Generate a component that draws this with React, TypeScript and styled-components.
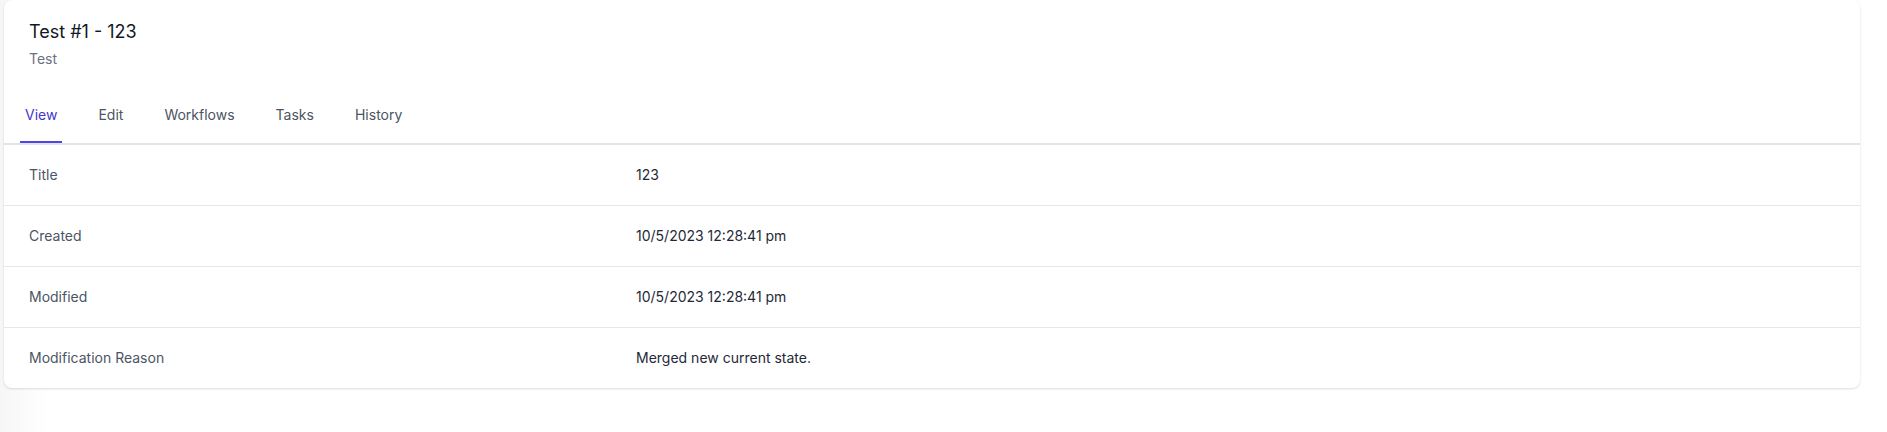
import React, { useState } from "react";
import styled, { createGlobalStyle } from "styled-components";

const GlobalStyle = createGlobalStyle`
  html, body {
    margin: 0;
    padding: 0;
  }

  body {
    font-family: Inter, "Noto Sans", sans-serif;
    background: linear-gradient(90deg, #f6f6f7 0px, #fcfcfc 30px, #ffffff 48px);
    min-height: 432px;
  }
`;

const Page = styled.div`
  padding: 0 27px 0 4px;
`;

const Card = styled.section`
  background: #ffffff;
  border-radius: 8px;
  box-shadow: 0 1px 3px rgba(0, 0, 0, 0.09), 0 1px 2px rgba(0, 0, 0, 0.05);
  overflow: hidden;
`;

const Header = styled.header`
  padding: 18px 25px 0;
`;

const Title = styled.h1`
  margin: 0;
  font-size: 18px;
  line-height: 28px;
  font-weight: 400;
  color: #111827;
`;

const Subtitle = styled.p`
  margin: 3px 0 0;
  font-size: 14px;
  line-height: 20px;
  color: #6b7280;
`;

const TabList = styled.nav`
  display: flex;
  gap: 31px;
  padding: 0 16px;
  border-bottom: 2px solid #e3e3e9;
`;

const Tab = styled.button<{ $active?: boolean }>`
  appearance: none;
  background: none;
  border: none;
  border-bottom: 2px solid ${(p) => (p.$active ? "#4f46e5" : "transparent")};
  margin: 0;
  padding: 36px 5px 16px;
  font-family: inherit;
  font-size: 14px;
  line-height: 20px;
  font-weight: 400;
  color: ${(p) => (p.$active ? "#4338ca" : "#4b5563")};
  cursor: pointer;
`;

const Rows = styled.dl`
  margin: 0;
`;

const Row = styled.div`
  display: grid;
  grid-template-columns: 607px 1fr;
  border-bottom: 1px solid #e5e7eb;

  &:last-child {
    border-bottom: none;
  }
`;

const Label = styled.dt`
  padding: 20px 25px;
  font-size: 14px;
  line-height: 20px;
  color: #4b5563;
`;

const Value = styled.dd`
  margin: 0;
  padding: 20px 25px;
  font-size: 14px;
  line-height: 20px;
  color: #1f2937;
`;

const tabs = ["View", "Edit", "Workflows", "Tasks", "History"];

const fields = [
  { label: "Title", value: "123" },
  { label: "Created", value: "10/5/2023 12:28:41 pm" },
  { label: "Modified", value: "10/5/2023 12:28:41 pm" },
  { label: "Modification Reason", value: "Merged new current state." },
];

export default function App() {
  const [activeTab, setActiveTab] = useState("View");

  return (
    <>
      <GlobalStyle />
      <Page>
        <Card>
          <Header>
            <Title>Test #1 - 123</Title>
            <Subtitle>Test</Subtitle>
          </Header>
          <TabList>
            {tabs.map((t) => (
              <Tab key={t} $active={t === activeTab} onClick={() => setActiveTab(t)}>
                {t}
              </Tab>
            ))}
          </TabList>
          <Rows>
            {fields.map((f) => (
              <Row key={f.label}>
                <Label>{f.label}</Label>
                <Value>{f.value}</Value>
              </Row>
            ))}
          </Rows>
        </Card>
      </Page>
    </>
  );
}
